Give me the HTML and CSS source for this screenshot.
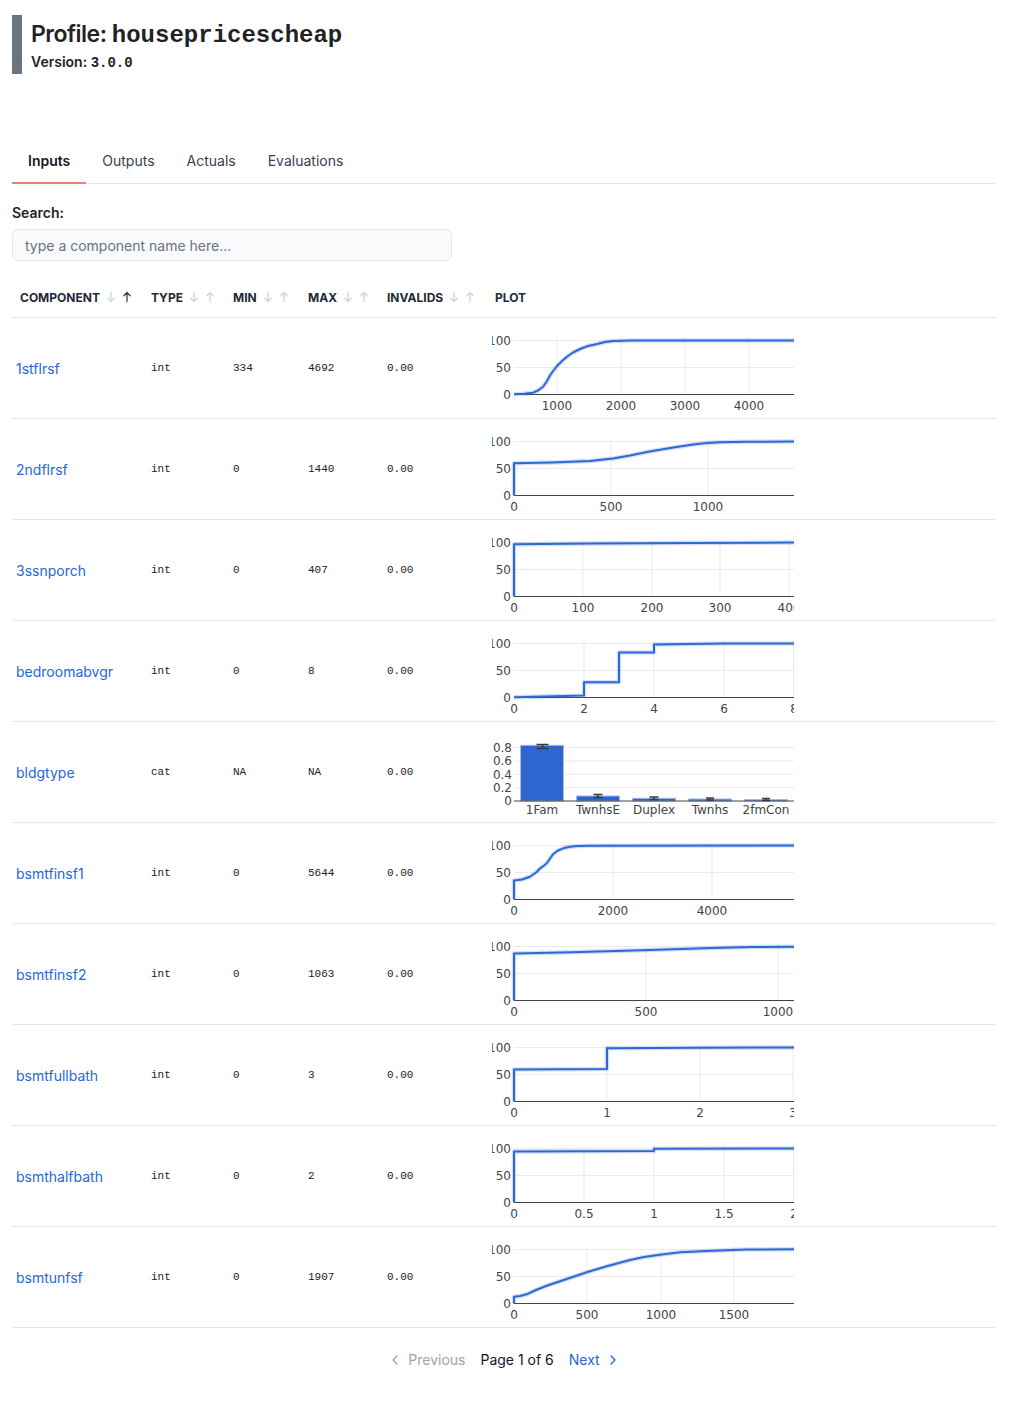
FILE: index.html
```html
<!DOCTYPE html>
<html lang="en">
<head>
<meta charset="utf-8">
<title>Profile: housepricescheap</title>
<link rel="stylesheet" href="styles.css">
</head>
<body>
<div class="page">
  <header class="profile">
    <h1 class="title">Profile: <code>housepricescheap</code></h1>
    <div class="version">Version: <code>3.0.0</code></div>
  </header>

  <nav class="tabs">
    <a class="tab active">Inputs</a>
    <a class="tab">Outputs</a>
    <a class="tab">Actuals</a>
    <a class="tab">Evaluations</a>
  </nav>

  <section class="search">
    <label class="search-label" for="q">Search:</label>
    <input id="q" class="search-input" type="text" placeholder="type a component name here...">
  </section>

  <div class="table">
    <div class="row thead">
      <div class="th">COMPONENT<span class="sort"><svg class="arr" viewBox="0 0 12 12"><path d="M6 1.5v9M2.8 7.2 6 10.5l3.2-3.3"/></svg><svg class="arr on" viewBox="0 0 12 12"><path d="M6 10.5v-9M2.8 4.8 6 1.5l3.2 3.3"/></svg></span></div>
      <div class="th">TYPE<span class="sort"><svg class="arr" viewBox="0 0 12 12"><path d="M6 1.5v9M2.8 7.2 6 10.5l3.2-3.3"/></svg><svg class="arr" viewBox="0 0 12 12"><path d="M6 10.5v-9M2.8 4.8 6 1.5l3.2 3.3"/></svg></span></div>
      <div class="th">MIN<span class="sort"><svg class="arr" viewBox="0 0 12 12"><path d="M6 1.5v9M2.8 7.2 6 10.5l3.2-3.3"/></svg><svg class="arr" viewBox="0 0 12 12"><path d="M6 10.5v-9M2.8 4.8 6 1.5l3.2 3.3"/></svg></span></div>
      <div class="th">MAX<span class="sort"><svg class="arr" viewBox="0 0 12 12"><path d="M6 1.5v9M2.8 7.2 6 10.5l3.2-3.3"/></svg><svg class="arr" viewBox="0 0 12 12"><path d="M6 10.5v-9M2.8 4.8 6 1.5l3.2 3.3"/></svg></span></div>
      <div class="th">INVALIDS<span class="sort"><svg class="arr" viewBox="0 0 12 12"><path d="M6 1.5v9M2.8 7.2 6 10.5l3.2-3.3"/></svg><svg class="arr" viewBox="0 0 12 12"><path d="M6 10.5v-9M2.8 4.8 6 1.5l3.2 3.3"/></svg></span></div>
      <div class="th">PLOT</div>
    </div>

    <!-- 1stflrsf -->
    <div class="row">
      <div class="td name"><a>1stflrsf</a></div>
      <div class="td mono">int</div>
      <div class="td mono">334</div>
      <div class="td mono">4692</div>
      <div class="td mono">0.00</div>
      <div class="td plotcell">
        <svg class="plot" width="302" height="100" viewBox="0 0 302 100">
          <path class="grid" d="M22 22.5H302M22 49.5H302M65 20V76.5M129 20V76.5M193 20V76.5M257 20V76.5"/>
          <path class="axis" d="M22 76.5H302"/>
          <text class="t ty" x="19" y="26.9">100</text><text class="t ty" x="19" y="53.9">50</text><text class="t ty" x="19" y="80.9">0</text>
          <text class="t tx" x="65" y="92.4">1000</text><text class="t tx" x="129" y="92.4">2000</text><text class="t tx" x="193" y="92.4">3000</text><text class="t tx" x="257" y="92.4">4000</text>
          <polyline class="halo" points="22,76.3 32,75.8 41,74.7 46,72.5 51,68.7 55,63 58,57.5 61.5,52.5 65,48 70,43 75,38.7 81,34.5 88,31 96,28 105,26 113,24 121,23 140,22.6 302,22.5"/>
          <polyline class="line" points="22,76.3 32,75.8 41,74.7 46,72.5 51,68.7 55,63 58,57.5 61.5,52.5 65,48 70,43 75,38.7 81,34.5 88,31 96,28 105,26 113,24 121,23 140,22.6 302,22.5"/>
        </svg>
      </div>
    </div>

    <!-- 2ndflrsf -->
    <div class="row">
      <div class="td name"><a>2ndflrsf</a></div>
      <div class="td mono">int</div>
      <div class="td mono">0</div>
      <div class="td mono">1440</div>
      <div class="td mono">0.00</div>
      <div class="td plotcell">
        <svg class="plot" width="302" height="100" viewBox="0 0 302 100">
          <path class="grid" d="M22 22.5H302M22 49.5H302M119 20V76.5M216 20V76.5"/>
          <path class="axis" d="M22 76.5H302"/>
          <text class="t ty" x="19" y="26.9">100</text><text class="t ty" x="19" y="53.9">50</text><text class="t ty" x="19" y="80.9">0</text>
          <text class="t tx" x="22" y="92.4">0</text><text class="t tx" x="119" y="92.4">500</text><text class="t tx" x="216" y="92.4">1000</text>
          <polyline class="halo" points="22,76.5 22,44.3 60,43.5 98,42 121,39.5 138,36.5 155,33 178,29 201,25.5 215,24 228,23.3 255,22.8 302,22.4"/>
          <polyline class="line" points="22,76.5 22,44.3 60,43.5 98,42 121,39.5 138,36.5 155,33 178,29 201,25.5 215,24 228,23.3 255,22.8 302,22.4"/>
        </svg>
      </div>
    </div>

    <!-- 3ssnporch -->
    <div class="row">
      <div class="td name"><a>3ssnporch</a></div>
      <div class="td mono">int</div>
      <div class="td mono">0</div>
      <div class="td mono">407</div>
      <div class="td mono">0.00</div>
      <div class="td plotcell">
        <svg class="plot" width="302" height="100" viewBox="0 0 302 100">
          <path class="grid" d="M22 22.5H302M22 49.5H302M91 20V76.5M160 20V76.5M228 20V76.5M297 20V76.5"/>
          <path class="axis" d="M22 76.5H302"/>
          <text class="t ty" x="19" y="26.9">100</text><text class="t ty" x="19" y="53.9">50</text><text class="t ty" x="19" y="80.9">0</text>
          <text class="t tx" x="22" y="92.4">0</text><text class="t tx" x="91" y="92.4">100</text><text class="t tx" x="160" y="92.4">200</text><text class="t tx" x="228" y="92.4">300</text><text class="t tx" x="297" y="92.4">400</text>
          <polyline class="halo" points="22,76.5 22,24.2 100,23.6 200,23 302,22.6"/>
          <polyline class="line" points="22,76.5 22,24.2 100,23.6 200,23 302,22.6"/>
        </svg>
      </div>
    </div>

    <!-- bedroomabvgr -->
    <div class="row">
      <div class="td name"><a>bedroomabvgr</a></div>
      <div class="td mono">int</div>
      <div class="td mono">0</div>
      <div class="td mono">8</div>
      <div class="td mono">0.00</div>
      <div class="td plotcell">
        <svg class="plot" width="302" height="100" viewBox="0 0 302 100">
          <path class="grid" d="M22 22.5H302M22 49.5H302M92 20V76.5M162 20V76.5M232 20V76.5M301.5 20V76.5"/>
          <path class="axis" d="M22 76.5H302"/>
          <text class="t ty" x="19" y="26.9">100</text><text class="t ty" x="19" y="53.9">50</text><text class="t ty" x="19" y="80.9">0</text>
          <text class="t tx" x="22" y="92.4">0</text><text class="t tx" x="92" y="92.4">2</text><text class="t tx" x="162" y="92.4">4</text><text class="t tx" x="232" y="92.4">6</text><text class="t tx" x="302" y="92.4">8</text>
          <polyline class="halo" points="22,76.3 92,74.4 92,61.2 127,61.2 127,31.4 162,31.4 162,23.5 197,22.9 232,22.6 302,22.5"/>
          <polyline class="line" points="22,76.3 92,74.4 92,61.2 127,61.2 127,31.4 162,31.4 162,23.5 197,22.9 232,22.6 302,22.5"/>
        </svg>
      </div>
    </div>

    <!-- bldgtype -->
    <div class="row">
      <div class="td name"><a>bldgtype</a></div>
      <div class="td mono">cat</div>
      <div class="td mono">NA</div>
      <div class="td mono">NA</div>
      <div class="td mono">0.00</div>
      <div class="td plotcell">
        <svg class="plot" width="302" height="100" viewBox="0 0 302 100">
          <path class="grid" d="M22 25.6H302M22 39H302M22 52.3H302M22 65.7H302"/>
          <text class="t ty" x="20" y="29.9">0.8</text><text class="t ty" x="20" y="43.3">0.6</text><text class="t ty" x="20" y="56.6">0.4</text><text class="t ty" x="20" y="70">0.2</text><text class="t ty" x="20" y="83.3">0</text>
          <rect class="bar" x="28.5" y="23.3" width="43" height="55.7"/>
          <rect class="bar" x="84.5" y="74" width="43" height="5"/>
          <rect class="bar" x="140.5" y="76.3" width="43" height="2.7"/>
          <rect class="bar" x="196.5" y="77" width="43" height="2"/>
          <rect class="bar" x="252.5" y="77.6" width="43" height="1.4"/>
          <path class="axis" d="M22 79H302"/>
          <path class="err" d="M44.5 22.5H56.5M44.5 26.5H56.5M50.5 22.5V26.5"/>
          <path class="err" d="M101.5 72.5H110.5M101.5 75.5H110.5M106 72.5V75.5"/>
          <path class="err" d="M157.5 75H166.5M157.5 77.5H166.5M162 75V77.5"/>
          <path class="err" d="M214 76H222M214 78H222M218 76V78"/>
          <path class="err" d="M270 76.5H278M270 78.5H278M274 76.5V78.5"/>
          <text class="t tx" x="50" y="92.4">1Fam</text><text class="t tx" x="106" y="92.4">TwnhsE</text><text class="t tx" x="162" y="92.4">Duplex</text><text class="t tx" x="218" y="92.4">Twnhs</text><text class="t tx" x="274" y="92.4">2fmCon</text>
        </svg>
      </div>
    </div>

    <!-- bsmtfinsf1 -->
    <div class="row">
      <div class="td name"><a>bsmtfinsf1</a></div>
      <div class="td mono">int</div>
      <div class="td mono">0</div>
      <div class="td mono">5644</div>
      <div class="td mono">0.00</div>
      <div class="td plotcell">
        <svg class="plot" width="302" height="100" viewBox="0 0 302 100">
          <path class="grid" d="M22 22.5H302M22 49.5H302M121 20V76.5M220 20V76.5"/>
          <path class="axis" d="M22 76.5H302"/>
          <text class="t ty" x="19" y="26.9">100</text><text class="t ty" x="19" y="53.9">50</text><text class="t ty" x="19" y="80.9">0</text>
          <text class="t tx" x="22" y="92.4">0</text><text class="t tx" x="121" y="92.4">2000</text><text class="t tx" x="220" y="92.4">4000</text>
          <polyline class="halo" points="22,76.5 22,57.5 30,56.5 38,53.7 44,49.5 48,45.5 52,42.5 55,40 58,35.5 61.3,31 66,27.5 71.3,25.3 78,23.8 85,23 100,22.7 302,22.6"/>
          <polyline class="line" points="22,76.5 22,57.5 30,56.5 38,53.7 44,49.5 48,45.5 52,42.5 55,40 58,35.5 61.3,31 66,27.5 71.3,25.3 78,23.8 85,23 100,22.7 302,22.6"/>
        </svg>
      </div>
    </div>

    <!-- bsmtfinsf2 -->
    <div class="row">
      <div class="td name"><a>bsmtfinsf2</a></div>
      <div class="td mono">int</div>
      <div class="td mono">0</div>
      <div class="td mono">1063</div>
      <div class="td mono">0.00</div>
      <div class="td plotcell">
        <svg class="plot" width="302" height="100" viewBox="0 0 302 100">
          <path class="grid" d="M22 22.5H302M22 49.5H302M154 20V76.5M286 20V76.5"/>
          <path class="axis" d="M22 76.5H302"/>
          <text class="t ty" x="19" y="26.9">100</text><text class="t ty" x="19" y="53.9">50</text><text class="t ty" x="19" y="80.9">0</text>
          <text class="t tx" x="22" y="92.4">0</text><text class="t tx" x="154" y="92.4">500</text><text class="t tx" x="286" y="92.4">1000</text>
          <polyline class="halo" points="22,76.5 22,29.5 80,28.3 150,26.3 220,24 260,23 302,22.8"/>
          <polyline class="line" points="22,76.5 22,29.5 80,28.3 150,26.3 220,24 260,23 302,22.8"/>
        </svg>
      </div>
    </div>

    <!-- bsmtfullbath -->
    <div class="row">
      <div class="td name"><a>bsmtfullbath</a></div>
      <div class="td mono">int</div>
      <div class="td mono">0</div>
      <div class="td mono">3</div>
      <div class="td mono">0.00</div>
      <div class="td plotcell">
        <svg class="plot" width="302" height="100" viewBox="0 0 302 100">
          <path class="grid" d="M22 22.5H302M22 49.5H302M115 20V76.5M208 20V76.5M301 20V76.5"/>
          <path class="axis" d="M22 76.5H302"/>
          <text class="t ty" x="19" y="26.9">100</text><text class="t ty" x="19" y="53.9">50</text><text class="t ty" x="19" y="80.9">0</text>
          <text class="t tx" x="22" y="92.4">0</text><text class="t tx" x="115" y="92.4">1</text><text class="t tx" x="208" y="92.4">2</text><text class="t tx" x="301" y="92.4">3</text>
          <polyline class="halo" points="22,76.5 22,44.6 115,44 115,23.3 208,22.8 302,22.5"/>
          <polyline class="line" points="22,76.5 22,44.6 115,44 115,23.3 208,22.8 302,22.5"/>
        </svg>
      </div>
    </div>

    <!-- bsmthalfbath -->
    <div class="row">
      <div class="td name"><a>bsmthalfbath</a></div>
      <div class="td mono">int</div>
      <div class="td mono">0</div>
      <div class="td mono">2</div>
      <div class="td mono">0.00</div>
      <div class="td plotcell">
        <svg class="plot" width="302" height="100" viewBox="0 0 302 100">
          <path class="grid" d="M22 22.5H302M22 49.5H302M92 20V76.5M162 20V76.5M232 20V76.5M301.5 20V76.5"/>
          <path class="axis" d="M22 76.5H302"/>
          <text class="t ty" x="19" y="26.9">100</text><text class="t ty" x="19" y="53.9">50</text><text class="t ty" x="19" y="80.9">0</text>
          <text class="t tx" x="22" y="92.4">0</text><text class="t tx" x="92" y="92.4">0.5</text><text class="t tx" x="162" y="92.4">1</text><text class="t tx" x="232" y="92.4">1.5</text><text class="t tx" x="302" y="92.4">2</text>
          <polyline class="halo" points="22,76.5 22,25.6 162,25 162,22.7 302,22.5"/>
          <polyline class="line" points="22,76.5 22,25.6 162,25 162,22.7 302,22.5"/>
        </svg>
      </div>
    </div>

    <!-- bsmtunfsf -->
    <div class="row">
      <div class="td name"><a>bsmtunfsf</a></div>
      <div class="td mono">int</div>
      <div class="td mono">0</div>
      <div class="td mono">1907</div>
      <div class="td mono">0.00</div>
      <div class="td plotcell">
        <svg class="plot" width="302" height="100" viewBox="0 0 302 100">
          <path class="grid" d="M22 22.5H302M22 49.5H302M95 20V76.5M169 20V76.5M242 20V76.5"/>
          <path class="axis" d="M22 76.5H302"/>
          <text class="t ty" x="19" y="26.9">100</text><text class="t ty" x="19" y="53.9">50</text><text class="t ty" x="19" y="80.9">0</text>
          <text class="t tx" x="22" y="92.4">0</text><text class="t tx" x="95" y="92.4">500</text><text class="t tx" x="169" y="92.4">1000</text><text class="t tx" x="242" y="92.4">1500</text>
          <polyline class="halo" points="22,76.5 22,69.7 28,69 34.7,67.3 44,63 54.7,58.7 74.7,52 94.7,45.3 114.7,39.3 138,33 152,30 168,27.7 188,25.3 221,23.7 255,22.6 302,22.3"/>
          <polyline class="line" points="22,76.5 22,69.7 28,69 34.7,67.3 44,63 54.7,58.7 74.7,52 94.7,45.3 114.7,39.3 138,33 152,30 168,27.7 188,25.3 221,23.7 255,22.6 302,22.3"/>
        </svg>
      </div>
    </div>
  </div>

  <nav class="pager">
    <span class="pg prev"><svg class="chev" viewBox="0 0 8 12"><path d="M6 2 2 6l4 4"/></svg>Previous</span>
    <span class="pg-info">Page 1 of 6</span>
    <a class="pg next">Next<svg class="chev" viewBox="0 0 8 12"><path d="M2 2l4 4-4 4"/></svg></a>
  </nav>
</div>
</body>
</html>
```

FILE: styles.css
```css
* { box-sizing: border-box; }

html, body {
  margin: 0;
  padding: 0;
  background: #ffffff;
}

body {
  font-family: Inter, "Liberation Sans", Arial, sans-serif;
  color: #1f2328;
  font-size: 14px;
}

.page {
  width: 984px;
  margin-left: 12px;
  padding-top: 15px;
  padding-bottom: 20px;
}

/* ---------- header ---------- */
.profile {
  border-left: 10px solid #6b7280;
  padding: 4px 0 2px 9px;
}

.title {
  margin: 0;
  height: 30px;
  font-size: 23px;
  line-height: 30px;
  font-weight: 600;
  letter-spacing: -0.5px;
  color: #1f2328;
}

.title code {
  font-family: "Liberation Mono", "Courier New", monospace;
  font-weight: 700;
  font-size: 24px;
  line-height: 20px;
  letter-spacing: 0;
}

.version {
  margin-top: 3px;
  height: 20px;
  font-size: 14px;
  line-height: 20px;
  font-weight: 600;
}

.version code {
  font-family: "Liberation Mono", "Courier New", monospace;
  font-weight: 700;
  font-size: 14px;
  line-height: 14px;
}

/* ---------- tabs ---------- */
.tabs {
  display: flex;
  margin-top: 66px;
  border-bottom: 1px solid #e5e7eb;
}

.tab {
  padding: 11px 16px;
  line-height: 20px;
  font-size: 14px;
  color: #374151;
  border-bottom: 2px solid transparent;
  margin-bottom: -1px;
}

.tab.active {
  color: #111827;
  font-weight: 600;
  border-bottom-color: #e8836f;
}

/* ---------- search ---------- */
.search {
  margin-top: 19px;
  display: flex;
  flex-direction: column;
  gap: 6px;
}

.search-label {
  font-weight: 600;
  line-height: 20px;
  font-size: 14px;
  color: #1f2328;
}

.search-input {
  width: 440px;
  height: 32px;
  border: 1px solid #e5e7eb;
  border-radius: 6px;
  background: #f9fafb;
  padding: 0 12px;
  font-family: Inter, "Liberation Sans", Arial, sans-serif;
  font-size: 14px;
  color: #1f2328;
  outline: none;
}

.search-input::placeholder {
  color: #6b7280;
}

/* ---------- table ---------- */
.table {
  margin-top: 16px;
}

.row {
  display: grid;
  grid-template-columns: 131px 82px 75px 79px 108px 1fr;
  align-items: center;
  border-bottom: 1px solid #e5e7eb;
}

.thead {
  height: 41px;
}

.th {
  padding-left: 8px;
  font-size: 12px;
  font-weight: 700;
  color: #1f2937;
  display: flex;
  align-items: center;
  white-space: nowrap;
}

.sort {
  display: inline-flex;
  gap: 4px;
  margin-left: 5px;
}

.arr {
  width: 12px;
  height: 12px;
  fill: none;
  stroke: #d1d5db;
  stroke-width: 1.3;
  stroke-linecap: round;
  stroke-linejoin: round;
}

.arr.on {
  stroke: #374151;
}

.td {
  padding-left: 8px;
}

.td.name {
  padding-left: 4px;
  font-size: 14px;
}

.td.name a {
  color: #2667d9;
  text-decoration: none;
}

.td.mono {
  font-family: "Liberation Mono", "Courier New", monospace;
  font-size: 11px;
  color: #222222;
}

.td.plotcell {
  padding-left: 5px;
}

.plot {
  display: block;
}

.plot .grid {
  stroke: #ebebeb;
  stroke-width: 1;
  fill: none;
}

.plot .axis {
  stroke: #444444;
  stroke-width: 1;
  fill: none;
}

.plot .t {
  font-family: "DejaVu Sans", Verdana, sans-serif;
  font-size: 12px;
  fill: #444444;
}

.plot .ty { text-anchor: end; }
.plot .tx { text-anchor: middle; }

.plot .halo {
  fill: none;
  stroke: rgba(45, 105, 211, 0.22);
  stroke-width: 4.5;
  stroke-linejoin: round;
}

.plot .line {
  fill: none;
  stroke: #2d69d3;
  stroke-width: 2;
  stroke-linejoin: round;
}

.plot .bar {
  fill: #2f65cf;
  stroke: #9dbbee;
  stroke-width: 1;
}

.plot .err {
  fill: none;
  stroke: #3a3a3a;
  stroke-width: 1.6;
}

/* ---------- pager ---------- */
.pager {
  margin-top: 22px;
  display: flex;
  justify-content: center;
  align-items: center;
  gap: 15px;
  line-height: 20px;
  font-size: 14px;
}

.pg {
  display: inline-flex;
  align-items: center;
  gap: 9px;
}

.pg.prev {
  color: #9ca3af;
}

.pg.next {
  color: #2667d9;
}

.pg-info {
  color: #111827;
}

.chev {
  width: 8px;
  height: 12px;
  fill: none;
  stroke: currentColor;
  stroke-width: 1.4;
  stroke-linecap: round;
  stroke-linejoin: round;
}
```
